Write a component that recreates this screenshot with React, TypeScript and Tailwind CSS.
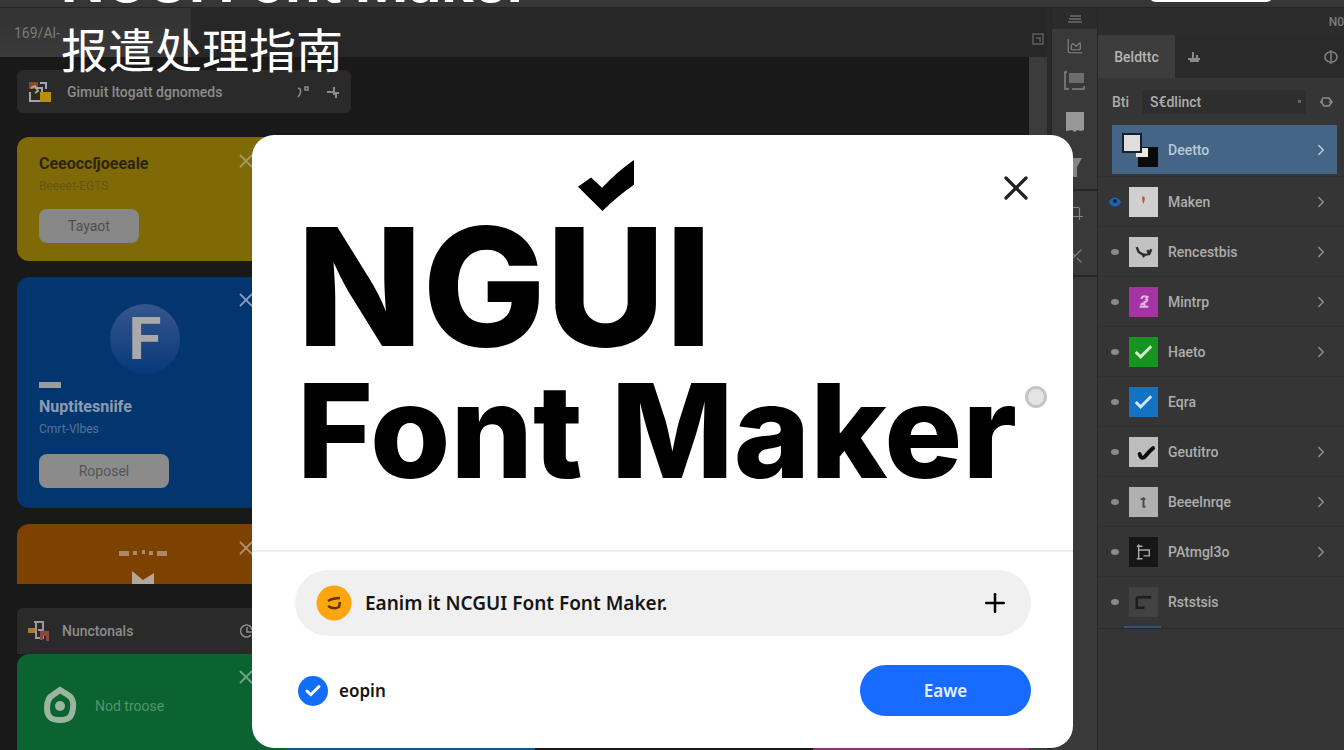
import { ReactNode, useState } from "react";
import {
  AreaChart,
  Check,
  ChevronRight,
  Crop,
  Plus,
  Scissors,
  X,
} from "lucide-react";

type Layer = {
  name: string;
  thumb: ReactNode;
  thumbClass: string;
  hasMore: boolean;
  visible?: boolean;
};

const layers: Layer[] = [
  {
    name: "Maken",
    thumbClass: "bg-[#cfcfcf]",
    hasMore: true,
    visible: true,
    thumb: <path d="M14 9c3 0 3 3 1 8-1-3-2-5-1-8z" fill="#b9543f" />,
  },
  {
    name: "Rencestbis",
    thumbClass: "bg-[#c2c2c2]",
    hasMore: true,
    thumb: (
      <path
        d="M8 10l2 5 5 3 6-1 2-5M14 18l2 2M19 13l2 4"
        fill="none"
        stroke="#2c2c2c"
        strokeWidth="2.5"
      />
    ),
  },
  {
    name: "Mintrp",
    thumbClass: "bg-[#a433a4]",
    hasMore: true,
    thumb: (
      <path
        d="M13 12a3 3 0 1 1 3 3v4M20 9l-3 4M11 20h9M12 18l3-2"
        fill="none"
        stroke="#e6b4e4"
        strokeWidth="2"
      />
    ),
  },
  {
    name: "Haeto",
    thumbClass: "bg-[#169420]",
    hasMore: true,
    thumb: (
      <path d="M7 15l5 5 11-11" fill="none" stroke="#d5efd2" strokeWidth="3" />
    ),
  },
  {
    name: "Eqra",
    thumbClass: "bg-[#1272c4]",
    hasMore: false,
    thumb: (
      <path d="M7 15l5 5 11-11" fill="none" stroke="#d3e6f7" strokeWidth="3" />
    ),
  },
  {
    name: "Geutitro",
    thumbClass: "bg-[#bdbdbd]",
    hasMore: true,
    thumb: (
      <path
        d="M11 17c1 5 4 5 6 2 2-2 4-5 8-8"
        fill="none"
        stroke="#0c0c0c"
        strokeWidth="4"
        strokeLinecap="round"
      />
    ),
  },
  {
    name: "Beeelnrqe",
    thumbClass: "bg-[#b0b0b0]",
    hasMore: true,
    thumb: (
      <path
        d="M12 12h5M15 10v10M14 20h3"
        fill="none"
        stroke="#4a4a4a"
        strokeWidth="2"
      />
    ),
  },
  {
    name: "PAtmgl3o",
    thumbClass: "bg-[#161616]",
    hasMore: true,
    thumb: (
      <path
        d="M10 7v16M8 9h6M10 13h11v6h-6M8 22h6"
        fill="none"
        stroke="#a8a8a8"
        strokeWidth="1.5"
      />
    ),
  },
  {
    name: "Rststsis",
    thumbClass: "bg-[#424242]",
    hasMore: false,
    thumb: (
      <path
        d="M23 10H10a2 2 0 0 0-2 2v9h8"
        fill="none"
        stroke="#1d1d1d"
        strokeWidth="2.5"
      />
    ),
  },
];

const CloseMark = ({ className }: { className: string }) => (
  <button aria-label="Close" className={className}>
    <X size={22} strokeWidth={2} />
  </button>
);

const Sidebar = () => {
  return (
    <aside className="flex w-[270px] shrink-0 flex-col">
      <div className="mt-[13px] flex h-[43px] w-[334px] shrink-0 items-center rounded-md bg-[#2a2a2a] px-[11px] text-[#8c8c8c]">
        <svg viewBox="0 0 24 24" width="24" height="24" aria-hidden="true">
          <path d="M1 2h9v7H1z" fill="#8d4a22" />
          <path
            d="M3 8l4-2 3 5-3 2M2 12v9h10M12 3h6v6M9 8h5v5"
            fill="none"
            stroke="#a5a5a5"
            strokeWidth="2"
          />
          <path d="M12 12h11v10H12z" fill="#b98d12" />
        </svg>
        <span className="ml-[15px] flex-1 text-sm font-medium">
          Gimuit ltogatt dgnomeds
        </span>
        <svg viewBox="0 0 14 14" width="14" height="14" aria-hidden="true">
          <path
            d="M2 3c4 1 3 6 0 9M9 2h3v3H9z"
            fill="none"
            stroke="currentColor"
            strokeWidth="1.5"
          />
        </svg>
        <svg
          viewBox="0 0 14 14"
          width="14"
          height="14"
          className="ml-4"
          aria-hidden="true"
        >
          <path
            d="M1 7h7M8 2v8M8 8h5M10 8v5"
            fill="none"
            stroke="currentColor"
            strokeWidth="2"
          />
        </svg>
      </div>

      <section className="mt-6 flex h-[124px] shrink-0 rounded-xl bg-[#806a08] pl-[22px]">
        <div className="flex-1 pt-4">
          <h2 className="text-base leading-[22px] font-bold text-[#2a2508]">
            Ceeoccſjoeeale
          </h2>
          <p className="text-xs leading-[22px] text-[#665613]">Beeeet-EGTS</p>
          <button className="mt-3 h-[34px] w-[100px] rounded-lg bg-[#878787] text-sm text-[#4e4e4e]">
            Tayaot
          </button>
        </div>
        <CloseMark className="mt-[13px] mr-[30px] self-start text-[#a59a62]" />
      </section>

      <section className="mt-4 flex h-[231px] shrink-0 rounded-xl bg-[#03366f] pl-[22px]">
        <div className="flex-1 pt-[27px]">
          <div className="ml-[71px] flex size-[70px] items-center justify-center rounded-full bg-linear-to-b from-[#34568c] to-[#05387a] text-[60px] font-bold text-[#a9a9a9]">
            F
          </div>
          <div className="mt-2 h-[6px] w-[22px] bg-[#9c9c9c]" />
          <h2 className="mt-[6px] text-base leading-[26px] font-bold text-[#8e9bb0]">
            Nuptitesniife
          </h2>
          <p className="text-xs leading-[18px] text-[#54739d]">Cmrt-Vlbes</p>
          <button className="mt-4 h-[34px] w-[130px] rounded-lg bg-[#8b8b8b] text-sm text-[#555]">
            Roposel
          </button>
        </div>
        <CloseMark className="mt-3 mr-[30px] self-start text-[#7f9bc0]" />
      </section>

      <section className="mt-4 flex h-[60px] shrink-0 overflow-hidden rounded-t-xl bg-[#7e4200]">
        <div className="flex flex-1 flex-col items-center justify-between pt-[26px] pl-[34px]">
          <svg viewBox="0 0 48 7" width="48" height="7" aria-hidden="true">
            <path
              d="M0 1h10v5H0zM14 1h4v4h-4zM23 0h3v4h-3zM30 1h4v4h-4zM38 1h10v5H38z"
              fill="#ac8966"
            />
          </svg>
          <svg viewBox="0 0 22 13" width="22" height="13" aria-hidden="true">
            <path d="M0 0l11 9L22 2v11H0z" fill="#b3a79a" />
          </svg>
        </div>
        <CloseMark className="mt-[13px] mr-[30px] self-start text-[#b08e68]" />
      </section>

      <div className="mt-6 flex h-[46px] shrink-0 items-center rounded-t-md bg-[#2a2a2a] px-[11px] text-[#8c8c8c]">
        <svg viewBox="0 0 22 22" width="22" height="22" aria-hidden="true">
          <path d="M0 8h8v5H0z" fill="#b37532" />
          <path
            d="M6 2h9v16H8V2M15 10h-5"
            fill="none"
            stroke="#a09898"
            strokeWidth="2"
          />
          <path d="M12 11h9v10h-3v-5h-3v4h-3z" fill="#8a4640" />
        </svg>
        <span className="ml-3 flex-1 text-sm font-medium">Nunctonals</span>
        <svg
          viewBox="0 0 14 14"
          width="14"
          height="14"
          className="mr-[22px]"
          aria-hidden="true"
        >
          <path
            d="M7 1a6 6 0 1 0 4 10M7 1a6 6 0 0 1 5 5M7 3v5h6"
            fill="none"
            stroke="currentColor"
            strokeWidth="1.5"
          />
        </svg>
      </div>

      <section className="flex min-h-[97px] flex-1 rounded-t-xl bg-[#0a6330] pl-[26px]">
        <svg
          viewBox="0 0 34 38"
          width="34"
          height="38"
          className="mt-8"
          aria-hidden="true"
        >
          <path
            d="M17 4l8 5c4 2 6 7 5 13-1 9-4 12-13 12S4 31 4 22c0-6 2-11 6-13z"
            fill="none"
            stroke="#9bb59f"
            strokeWidth="6"
          />
          <circle cx="17" cy="20" r="5" fill="#9bb59f" />
        </svg>
        <span className="mt-[42px] ml-[18px] flex-1 text-sm text-[#55946c]">
          Nod troose
        </span>
        <CloseMark className="mt-3 mr-[30px] self-start text-[#6fa483]" />
      </section>
    </aside>
  );
};

const ToolStrip = () => {
  return (
    <nav className="flex w-[47px] shrink-0 flex-col border-x border-[#262626] bg-[#393939] text-[#858585]">
      <div className="flex h-[21px] items-center justify-center bg-[#2b2b2b]">
        <svg viewBox="0 0 14 10" width="14" height="10" aria-hidden="true">
          <path d="M2 2h11M1 5h12M0 8h14" stroke="#5c5c5c" strokeWidth="2" />
        </svg>
      </div>
      <div className="flex flex-col items-center pt-[8px]">
        <AreaChart size={18} strokeWidth={1.5} />
        <svg
          viewBox="0 0 22 20"
          width="22"
          height="20"
          className="mt-4"
          aria-hidden="true"
        >
          <path
            d="M3 1H1v17h4M8 18h12v-3"
            fill="none"
            stroke="currentColor"
            strokeWidth="1.5"
          />
          <path d="M5 2h15v10H5z" fill="#6d6d6d" />
        </svg>
        <svg
          viewBox="0 0 20 20"
          width="20"
          height="20"
          className="mt-[21px]"
          aria-hidden="true"
        >
          <path d="M1 0h18v18l-3 1-4-1-2 2-3-2-6 1z" fill="#989898" />
        </svg>
        <svg
          viewBox="0 0 16 20"
          width="16"
          height="20"
          className="mt-[26px]"
          aria-hidden="true"
        >
          <path d="M0 0h15l-5 9v10H6V9z" fill="#858585" />
        </svg>
      </div>
      <div className="mt-[11px] flex h-[88px] flex-col items-center gap-[26px] border-y-2 border-[#272727] pt-3">
        <Crop size={18} strokeWidth={1.5} />
        <Scissors size={18} strokeWidth={1.5} />
      </div>
    </nav>
  );
};

const LayersPanel = () => {
  return (
    <section className="flex w-[246px] shrink-0 flex-col bg-[#353535] text-sm font-medium text-[#adadad]">
      <div className="flex h-[27px] items-center justify-end bg-[#2c2c2c] text-xs text-[#7c7c7c]">
        N0
      </div>
      <div className="flex h-[43px] items-center bg-[#2a2a2a]">
        <button className="h-full w-[77px] bg-[#3d3d3d] text-[#b5b5b5]">
          Beldttc
        </button>
        <svg
          viewBox="0 0 14 12"
          width="14"
          height="12"
          className="ml-[12px]"
          aria-hidden="true"
        >
          <path
            d="M1 8h12M6 1v8M10 4v5M3 10h9"
            fill="none"
            stroke="#8a8a8a"
            strokeWidth="2"
          />
        </svg>
        <svg
          viewBox="0 0 16 14"
          width="16"
          height="14"
          className="mr-[5px] ml-auto"
          aria-hidden="true"
        >
          <path
            d="M7 2a5 5 0 1 0 0 10M9 2a5 5 0 0 1 0 10M8 0v14"
            fill="none"
            stroke="#858585"
            strokeWidth="1.5"
          />
        </svg>
      </div>

      <div className="flex h-[47px] items-center pl-[14px]">
        <label htmlFor="layer-kind" className="w-[30px]">
          Bti
        </label>
        <select
          id="layer-kind"
          className="h-6 min-w-0 flex-1 appearance-none bg-[#2e2e2e] pl-2"
        >
          <option>S€dlinct</option>
        </select>
        <span className="-ml-2 size-[3px] bg-[#666]" />
        <svg
          viewBox="0 0 14 14"
          width="14"
          height="14"
          className="mr-[11px] ml-[18px]"
          aria-hidden="true"
        >
          <path
            d="M4 3h6l3 4-3 4H5L2 7zM1 7h3M10 7h3"
            fill="none"
            stroke="#8b8b8b"
            strokeWidth="1.5"
          />
        </svg>
      </div>

      <ul className="border-b border-[#2a2a2a]">
        <li className="pb-[2px]">
          <button className="ml-[14px] flex h-[49px] w-[225px] items-center bg-[#456587] pr-[7px] pl-[10px] text-[#b9c8d8]">
            <svg viewBox="0 0 36 34" width="36" height="34" aria-hidden="true">
              <path d="M16 14h20v20H16z" fill="#0a0a0a" />
              <path
                d="M1 1h18v18H1z"
                fill="#dedede"
                stroke="#14202f"
                strokeWidth="2"
              />
              <path d="M14 20h6v-5h6v9H14z" fill="#e9e9e0" />
            </svg>
            <span className="ml-[10px] flex-1 text-left">Deetto</span>
            <ChevronRight size={18} />
          </button>
        </li>
        {layers.map((layer) => (
          <li key={layer.name} className="border-t border-[#303030]">
            <button className="flex h-[49px] w-full items-center pr-[14px] pl-[11px]">
              <svg
                viewBox="0 0 12 10"
                width="12"
                height="10"
                className="mr-[8px]"
                aria-hidden="true"
              >
                {layer.visible ? (
                  <>
                    <path d="M0 5c3-6 9-6 12 0-3 6-9 6-12 0z" fill="#1c66b4" />
                    <circle cx="6" cy="4" r="2" fill="#0b2444" />
                  </>
                ) : (
                  <ellipse cx="6" cy="5" rx="4" ry="3" fill="#8a8a8a" />
                )}
              </svg>
              <svg
                viewBox="0 0 30 30"
                width="29"
                height="30"
                className={layer.thumbClass}
                aria-hidden="true"
              >
                {layer.thumb}
              </svg>
              <span className="ml-[10px] flex-1 text-left">{layer.name}</span>
              {layer.hasMore && (
                <ChevronRight size={18} className="text-[#8f8f8f]" />
              )}
            </button>
          </li>
        ))}
        <li className="ml-[26px] h-[2px] w-[37px] bg-[#34507c]" />
      </ul>
    </section>
  );
};

const FontMakerDialog = () => {
  const [text, setText] = useState("Eanim it NCGUI Font Font Maker.");
  const [checked, setChecked] = useState(true);

  return (
    <div
      role="dialog"
      aria-labelledby="dialog-title"
      className="relative w-full max-w-[821px] rounded-[22px] bg-white text-black"
    >
      <button
        aria-label="Close dialog"
        className="absolute top-[33px] right-[37px] text-[#222]"
      >
        <X size={40} strokeWidth={2} />
      </button>

      <div className="border-b-2 border-[#eeeeee] pt-[75px] pb-[52px] pl-[45px]">
        <h1
          id="dialog-title"
          className="font-['Inter',sans-serif] font-extrabold whitespace-nowrap"
        >
          <span className="block text-[164px] leading-[154px]">
            NG
            <span className="relative">
              U
              <svg
                viewBox="0 0 167 152"
                width="57"
                height="51"
                className="absolute -top-[27px] left-1/2 -translate-x-1/2"
                aria-hidden="true"
              >
                <path d="M0 80L39 52L72 83Q115 36 167 0V74Q118 108 73 152Z" />
              </svg>
            </span>
            I
          </span>
          <span className="flex items-start text-[130px] leading-[134px]">
            Font Maker
            <span className="mt-[22px] ml-2 size-[22px] rounded-full border-3 border-[#c4c4c4] bg-[#e4e4e4]" />
          </span>
        </h1>
      </div>

      <div className="pt-[18px] pr-[42px] pb-8 pl-[43px]">
        <div className="flex h-[66px] items-center rounded-full bg-[#f0f0f0] px-[21px]">
          <svg viewBox="0 0 36 36" width="36" height="36" aria-hidden="true">
            <circle cx="18" cy="18" r="17.5" fill="#fda50f" />
            <path
              d="M12 16q5-3 12-3M12 21q6 4 11 1l1-5"
              fill="none"
              stroke="#5a3606"
              strokeWidth="2.5"
            />
          </svg>
          <input
            aria-label="Font text"
            value={text}
            onChange={(e) => setText(e.target.value)}
            className="ml-[13px] min-w-0 flex-1 bg-transparent font-['Noto_Sans',sans-serif] text-[19px] font-semibold text-[#151515] outline-none"
          />
          <button aria-label="Add">
            <Plus size={30} strokeWidth={2} />
          </button>
        </div>

        <div className="mt-[29px] flex h-[51px] items-center justify-between">
          <label className="ml-[3px] flex items-center gap-[11px] font-['Noto_Sans',sans-serif] text-[17px] font-semibold text-[#151515]">
            <span className="relative size-[30px]">
              <input
                type="checkbox"
                checked={checked}
                onChange={() => setChecked(!checked)}
                className="block size-[30px] appearance-none rounded-full bg-[#136dfb]"
              />
              {checked && (
                <Check
                  size={18}
                  strokeWidth={4}
                  className="pointer-events-none absolute top-[6px] left-[6px] text-white"
                />
              )}
            </span>
            eopin
          </label>
          <button className="h-[51px] w-[171px] rounded-full bg-[#176bff] font-['Noto_Sans',sans-serif] text-[17px] font-semibold text-[#e6efff]">
            Eawe
          </button>
        </div>
      </div>
    </div>
  );
};

const App = () => {
  return (
    <div className="relative flex h-screen flex-col overflow-hidden bg-[#191919] font-['Roboto',sans-serif]">
      <div className="h-[7px] shrink-0 bg-[#363636]" />
      <div className="flex min-h-0 flex-1 border-t border-[#242424]">
        <main className="flex min-w-0 flex-1 flex-col">
          <div className="flex h-[49px] shrink-0 bg-[#272727]">
            <div className="flex w-[191px] items-center bg-linear-to-b from-[#323232] to-[#3a3a3a] pl-[14px] text-sm text-[#7a7a7a]">
              169/Al-
            </div>
          </div>
          <div className="flex min-h-0 flex-1 pl-[17px]">
            <Sidebar />
            {/* top edges of the next row of cards */}
            <div className="flex flex-1 items-end justify-between">
              <div className="h-[2px] w-[248px] bg-[#0a5a92]" />
              <div className="h-[2px] w-[216px] bg-[#8c3468]" />
            </div>
          </div>
        </main>
        <div className="flex w-[22px] shrink-0 flex-col border-r-4 border-[#2a2a2a] bg-[#3c3c3c]">
          <div className="flex h-[49px] items-center justify-center bg-[#272727] pt-7 pb-4">
            <svg viewBox="0 0 12 12" width="12" height="12" aria-hidden="true">
              <path
                d="M1 1h10v10H1zM4 5h4v4"
                fill="none"
                stroke="#5e5e5e"
                strokeWidth="1.5"
              />
            </svg>
          </div>
        </div>
        <ToolStrip />
        <LayersPanel />
      </div>

      {/* page caption, scrolled half out of view */}
      <header className="absolute -top-[57px] left-[61px] text-white">
        <p className="font-['Inter',sans-serif] text-[57px] leading-[78px] font-bold whitespace-nowrap">
          NGUI Font Maker
        </p>
        <p className="font-['Noto_Sans_CJK_SC',sans-serif] text-[47px] leading-[54px]">
          报遣处理指南
        </p>
      </header>
      <div className="absolute -top-[30px] right-[70px] h-8 w-[126px] rounded-lg bg-white" />

      <div className="absolute inset-0 flex items-start justify-center pt-[135px] pr-[19px]">
        <FontMakerDialog />
      </div>
    </div>
  );
};

export default App;
